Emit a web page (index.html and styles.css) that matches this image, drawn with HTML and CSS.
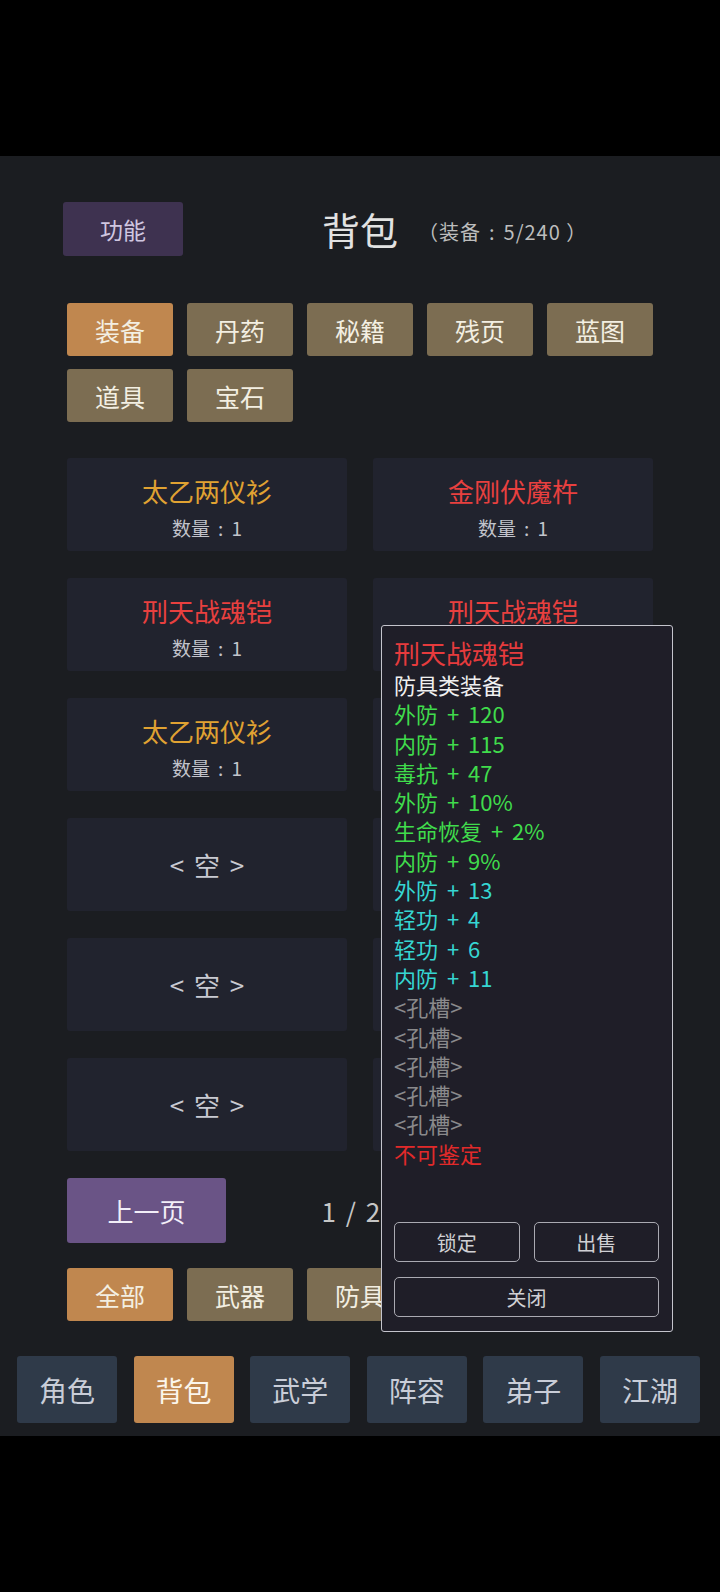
FILE: index.html
```html
<!DOCTYPE html>
<html lang="zh-CN">
<head>
  <meta charset="UTF-8" />
  <meta name="viewport" content="width=device-width, initial-scale=1.0"/>
  <title>背包</title>
  <link rel="stylesheet" href="styles.css">
</head>
<body>
  <div class="bag-screen">
    <!-- Header -->
    <div class="bag-header">
      <div class="bag-header-left">
        <button class="bag-func-btn">功能</button>
      </div>
      <h1 class="bag-title">背包</h1>
      <div class="bag-header-right">
        <span class="bag-count">（装备<span class="colon">:</span>5/240 ）</span>
      </div>
    </div>

    <!-- Category tabs -->
    <div class="bag-tabs">
      <button class="bag-tab active">装备</button>
      <button class="bag-tab">丹药</button>
      <button class="bag-tab">秘籍</button>
      <button class="bag-tab">残页</button>
      <button class="bag-tab">蓝图</button>
      <button class="bag-tab">道具</button>
      <button class="bag-tab">宝石</button>
    </div>

    <!-- Item grid -->
    <div class="bag-grid">
      <div class="bag-card">
        <div class="bag-card-name gold">太乙两仪衫</div>
        <div class="bag-card-qty">数量<span class="colon">:</span>1</div>
      </div>
      <div class="bag-card">
        <div class="bag-card-name red">金刚伏魔杵</div>
        <div class="bag-card-qty">数量<span class="colon">:</span>1</div>
      </div>
      <div class="bag-card">
        <div class="bag-card-name red">刑天战魂铠</div>
        <div class="bag-card-qty">数量<span class="colon">:</span>1</div>
      </div>
      <div class="bag-card">
        <div class="bag-card-name red">刑天战魂铠</div>
        <div class="bag-card-qty">数量<span class="colon">:</span>1</div>
      </div>
      <div class="bag-card">
        <div class="bag-card-name gold">太乙两仪衫</div>
        <div class="bag-card-qty">数量<span class="colon">:</span>1</div>
      </div>
      <div class="bag-card">
        <div class="bag-card-name gold">太乙两仪衫</div>
        <div class="bag-card-qty">数量<span class="colon">:</span>1</div>
      </div>
      <div class="bag-card empty">&lt; 空 &gt;</div>
      <div class="bag-card empty">&lt; 空 &gt;</div>
      <div class="bag-card empty">&lt; 空 &gt;</div>
      <div class="bag-card empty">&lt; 空 &gt;</div>
      <div class="bag-card empty">&lt; 空 &gt;</div>
      <div class="bag-card empty">&lt; 空 &gt;</div>
    </div>

    <!-- Pagination -->
    <div class="bag-pager">
      <button class="bag-page-btn">上一页</button>
      <span class="bag-page-num">1 / 20</span>
      <button class="bag-page-btn">下一页</button>
    </div>

    <!-- Equipment filter -->
    <div class="bag-tabs bag-filter">
      <button class="bag-tab active">全部</button>
      <button class="bag-tab">武器</button>
      <button class="bag-tab">防具</button>
      <button class="bag-tab">饰品</button>
      <button class="bag-tab">其他</button>
    </div>

    <!-- Bottom navigation -->
    <div class="bag-nav">
      <button class="bag-nav-btn">角色</button>
      <button class="bag-nav-btn active">背包</button>
      <button class="bag-nav-btn">武学</button>
      <button class="bag-nav-btn">阵容</button>
      <button class="bag-nav-btn">弟子</button>
      <button class="bag-nav-btn">江湖</button>
    </div>

    <!-- Item detail popup -->
    <div class="bag-popup">
      <div class="bag-popup-title">刑天战魂铠</div>
      <div class="bag-popup-line white">防具类装备</div>
      <div class="bag-popup-line green">外防 + 120</div>
      <div class="bag-popup-line green">内防 + 115</div>
      <div class="bag-popup-line green">毒抗 + 47</div>
      <div class="bag-popup-line green">外防 + 10%</div>
      <div class="bag-popup-line green">生命恢复 + 2%</div>
      <div class="bag-popup-line green">内防 + 9%</div>
      <div class="bag-popup-line cyan">外防 + 13</div>
      <div class="bag-popup-line cyan">轻功 + 4</div>
      <div class="bag-popup-line cyan">轻功 + 6</div>
      <div class="bag-popup-line cyan">内防 + 11</div>
      <div class="bag-popup-line grey">&lt;孔槽&gt;</div>
      <div class="bag-popup-line grey">&lt;孔槽&gt;</div>
      <div class="bag-popup-line grey">&lt;孔槽&gt;</div>
      <div class="bag-popup-line grey">&lt;孔槽&gt;</div>
      <div class="bag-popup-line grey">&lt;孔槽&gt;</div>
      <div class="bag-popup-line red">不可鉴定</div>

      <div class="bag-popup-actions">
        <button class="bag-popup-btn">锁定</button>
        <button class="bag-popup-btn">出售</button>
        <button class="bag-popup-btn wide">关闭</button>
      </div>
    </div>
  </div>
</body>
</html>
```

FILE: styles.css
```css
:root {
  --bag-bg: #1b1d21;
  --bag-card: #21232e;
  --bag-tab: #7c6d52;
  --bag-active: #c0874f;
  --bag-nav: #2f3a49;
  --bag-font: "Noto Sans CJK SC", "Noto Sans", sans-serif;
}

html, body {
  margin: 0;
  padding: 0;
  background: #000;
}

body {
  width: 720px;
  height: 1592px;
  font-family: var(--bag-font);
}

button {
  font-family: var(--bag-font);
  border: none;
  padding: 0;
  cursor: pointer;
}

/* centred colon, as the game font draws its full-width one */
.colon {
  display: inline-block;
  margin: 0 8px;
}

.bag-screen {
  position: relative;
  margin-top: 156px;
  height: 1280px;
  background: var(--bag-bg);
  display: flex;
  flex-direction: column;
  align-items: center;
}

/* Header */
.bag-header {
  width: 586px;
  margin-top: 46px;
  display: grid;
  grid-template-columns: 1fr auto 1fr;
  align-items: center;
}

.bag-func-btn {
  width: 120px;
  height: 54px;
  margin-left: -4px;
  background: #3e3250;
  color: #cfc6e0;
  font-size: 23px;
  border-radius: 3px;
}

.bag-title {
  margin: 0;
  font-size: 38px;
  font-weight: normal;
  line-height: 54px;
  color: #e2e2e2;
}

.bag-count {
  display: inline-block;
  margin-left: 20px;
  margin-top: 4px;
  font-size: 20px;
  color: #bdbdbd;
  letter-spacing: 1px;
}

/* Tabs */
.bag-tabs {
  width: 586px;
  margin-top: 47px;
  display: flex;
  flex-wrap: wrap;
  gap: 13px 14px;
}

.bag-tab {
  width: 106px;
  height: 53px;
  background: var(--bag-tab);
  color: #f3efe2;
  font-size: 25px;
  border-radius: 3px;
}

.bag-tab.active {
  background: var(--bag-active);
}

/* Items */
.bag-grid {
  width: 586px;
  margin-top: 36px;
  display: grid;
  grid-template-columns: 280px 280px;
  grid-auto-rows: 93px;
  gap: 27px 26px;
}

.bag-card {
  background: var(--bag-card);
  border-radius: 3px;
  display: flex;
  flex-direction: column;
  align-items: center;
  padding-top: 18px;
  box-sizing: border-box;
}

.bag-card-name {
  font-size: 26px;
  line-height: 30px;
}

.bag-card-name.gold { color: #e0a232; }
.bag-card-name.red { color: #e8403f; }

.bag-card-qty {
  margin-top: 10px;
  font-size: 19px;
  line-height: 24px;
  color: #c2c3cb;
}

.bag-card.empty {
  padding-top: 0;
  justify-content: center;
  font-size: 26px;
  color: #c8c9d1;
  word-spacing: 4px;
}

/* Pager */
.bag-pager {
  width: 586px;
  margin-top: 27px;
  display: flex;
  justify-content: space-between;
  align-items: center;
}

.bag-page-btn {
  width: 159px;
  height: 65px;
  background: #6a5486;
  color: #f2eef8;
  font-size: 26px;
  border-radius: 3px;
}

.bag-page-num {
  font-size: 26px;
  color: #c6c6c6;
  letter-spacing: 2px;
}

.bag-filter {
  margin-top: 25px;
}

/* Bottom nav */
.bag-nav {
  width: 683px;
  margin-top: 35px;
  margin-left: -3px;
  display: flex;
  justify-content: space-between;
}

.bag-nav-btn {
  width: 100px;
  height: 67px;
  background: var(--bag-nav);
  color: #c9cdd8;
  font-size: 28px;
  border-radius: 3px;
}

.bag-nav-btn.active {
  background: var(--bag-active);
  color: #fbf6ec;
}

/* Popup */
.bag-popup {
  position: absolute;
  left: 381px;
  top: 469px;
  width: 292px;
  height: 707px;
  box-sizing: border-box;
  padding: 10px 13px 14px 12px;
  background: #1f1e28;
  border: 1px solid #c4c4cc;
  border-radius: 3px;
  display: flex;
  flex-direction: column;
}

.bag-popup-title {
  font-size: 26px;
  line-height: 34px;
  color: #e63b3d;
}

.bag-popup-line {
  font-size: 22px;
  line-height: 29.3px;
  word-spacing: 4px;
}

.bag-popup-line.white { color: #f0f0f0; }
.bag-popup-line.green { color: #40dc4c; }
.bag-popup-line.cyan { color: #36d6d2; }
.bag-popup-line.grey { color: #8a8a8c; }
.bag-popup-line.red { color: #e22a2a; }

.bag-popup-actions {
  margin-top: auto;
  display: grid;
  grid-template-columns: 1fr 1fr;
  gap: 15px 14px;
}

.bag-popup-btn {
  height: 40px;
  background: transparent;
  border: 1px solid #aaaab2;
  border-radius: 5px;
  color: #d0d0d4;
  font-size: 20px;
}

.bag-popup-btn.wide {
  grid-column: 1 / 3;
}
```
